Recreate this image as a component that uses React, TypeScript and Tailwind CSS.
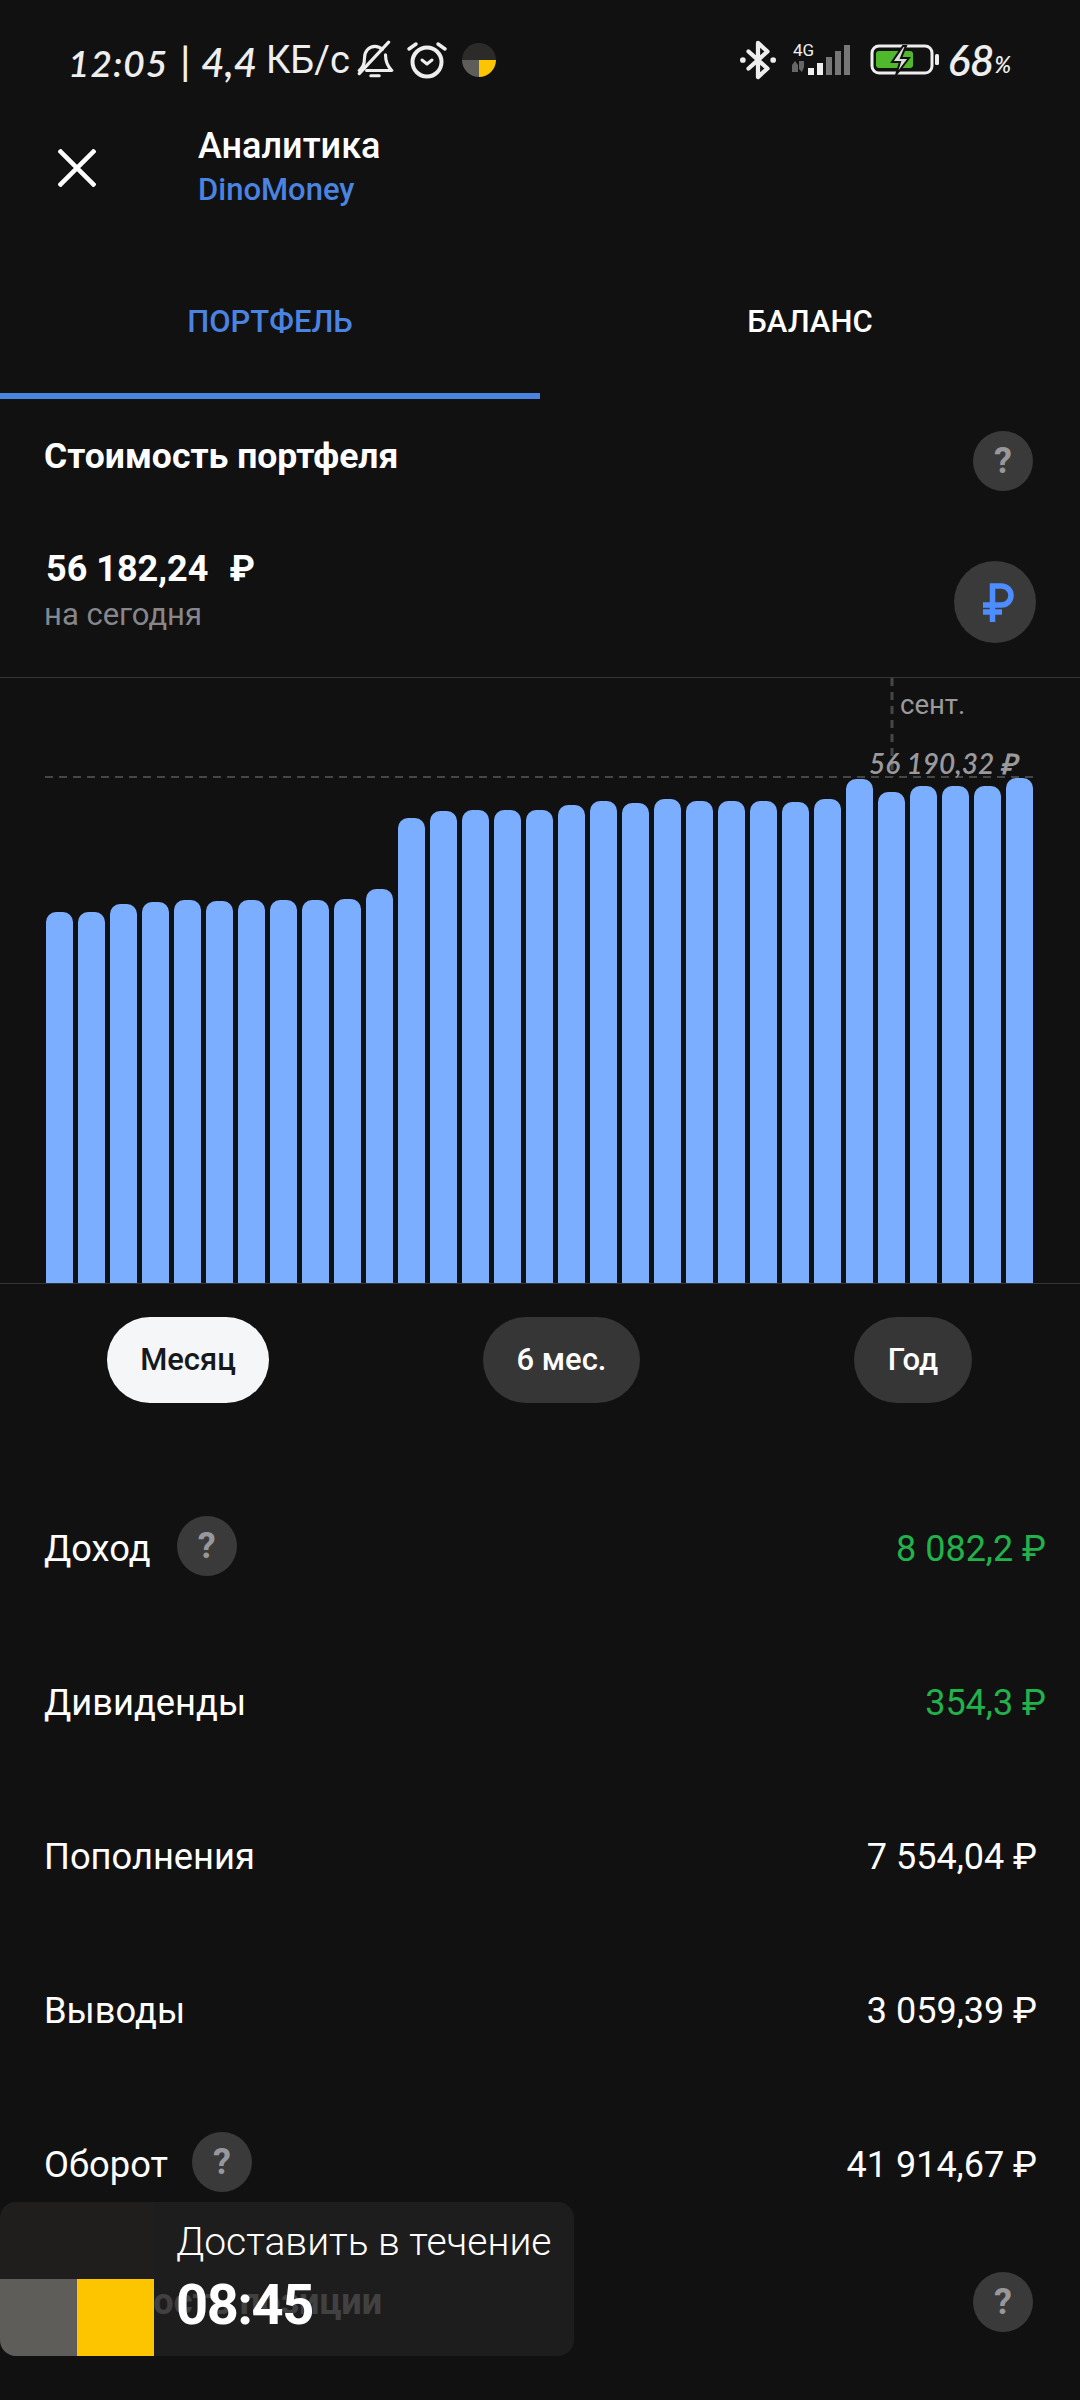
import React from "react";

const bars = [912, 912, 904, 902, 900, 901, 900, 900, 900, 899, 889, 818, 811, 810, 810, 810, 805, 801, 803, 799, 801, 801, 801, 802, 799, 779, 792, 786, 786, 786, 778];

const Help = ({ className = "" }: { className?: string }) => (
  <div className={`flex h-[60px] w-[60px] shrink-0 items-center justify-center rounded-full bg-[#3a3a3a] text-[36px] font-bold leading-none text-[#98989c] ${className}`}>?</div>
);

const Row = ({ label, value, helpGap, green }: { label: string; value: string; helpGap?: string; green?: boolean }) => (
  <div className={`flex h-[154px] items-center justify-between pl-[44px] ${green ? "pr-[34px]" : "pr-[43px]"}`}>
    <div className="flex items-center">
      <span className="pt-[5px] text-[36.300px] leading-[44px] text-white">{label}</span>
      {helpGap && <Help className={helpGap} />}
    </div>
    <span className={`pt-[5px] text-[36px] leading-[44px] ${green ? "text-[#22b24c]" : "text-white"}`}>{value}</span>
  </div>
);

const Ruble = () => (
  <svg className="ml-[7px]" width="31" height="39" viewBox="0 0 31 39" fill="none" stroke="#4d8dff" strokeWidth="5.500">
    <path d="M9.500 39V3h9a9.500 9.500 0 0 1 0 19H0M0 29h19" />
  </svg>
);

export default function App() {
  return (
    <div className="relative h-[2400px] w-[1080px] overflow-hidden bg-[#111111] font-['Roboto',sans-serif] text-white">
      {/* status bar */}
      <div className="flex h-[120px] items-center justify-between pl-[68px] pr-[69px] text-[#eeeeee]">
        <div className="flex items-center">
          <span className="pt-[4px] font-['Lato',sans-serif] text-[37px] font-semibold italic leading-none tracking-[1px]">12:05</span>
          <span className="ml-[12px] font-['Lato',sans-serif] text-[38px] font-semibold italic leading-none">|</span>
          <span className="ml-[11px] pt-[4px] font-['Lato',sans-serif] text-[40px] font-semibold italic leading-none">4,4</span>
          <span className="ml-[9px] text-[38px] leading-none">КБ/с</span>
          <svg className="ml-[6px]" width="38" height="42" viewBox="0 0 36 40" fill="none" stroke="#eeeeee" strokeWidth="3" strokeLinecap="round" strokeLinejoin="round">
            <path d="M3 30c3-3 5-5 5-12 0-6 4-11 10-11 3 0 5 1 7 3M28 15c0 7 2 11 6 15H10M14 35h8M31 3 3 33" />
          </svg>
          <svg className="ml-[12px]" width="42" height="42" viewBox="0 0 42 42" fill="none" stroke="#eeeeee" strokeLinecap="round" strokeLinejoin="round">
            <circle cx="21" cy="23" r="14.500" strokeWidth="4" />
            <path d="M16 21l5 4 5-4" strokeWidth="3" />
            <path d="M3 10l7-5M39 10l-7-5" strokeWidth="3.500" />
          </svg>
          <svg className="ml-[14px]" width="34" height="34" viewBox="0 0 34 34">
            <path d="M0 17a17 17 0 0 1 34 0z" fill="#2d2b29" />
            <path d="M0 17h17v17a17 17 0 0 1-17-17z" fill="#5e5d5a" />
            <path d="M17 17h17a17 17 0 0 1-17 17z" fill="#fdc500" />
          </svg>
        </div>
        <div className="flex items-center">
          <svg width="36" height="40" viewBox="0 0 38 40" fill="none">
            <path d="M9 11l20 18-10 9V2l10 9L9 29" stroke="#eeeeee" strokeWidth="4.500" strokeLinejoin="round" strokeLinecap="round" />
            <circle cx="3" cy="20" r="3" fill="#eeeeee" />
            <circle cx="35" cy="20" r="3" fill="#eeeeee" />
          </svg>
          <svg className="ml-[14px]" width="66" height="40" viewBox="0 -3 66 40">
            <text x="3" y="13" fontSize="17" fill="#eeeeee" fontFamily="Roboto">4G</text>
            <path d="M2 22l3-4 3 4v7H2zM9 18h5v6l-2 5-3-3z" fill="#666666" />
            <path d="M18 25h6v7h-6zM27 20h6v12h-6z" fill="#eeeeee" />
            <path d="M36 14h6v18h-6zM45 8h6v24h-6zM54 2h6v30h-6z" fill="#777777" />
          </svg>
          <svg className="ml-[14px]" width="70" height="32" viewBox="0 0 70 32" fill="none">
            <rect x="2" y="2" width="60" height="27" rx="7" stroke="#eeeeee" strokeWidth="3" />
            <rect x="6" y="7" width="37" height="17" rx="3" fill="#4fb82b" />
            <rect x="65" y="10" width="4" height="11" rx="1.500" fill="#eeeeee" />
            <path d="M33 2 22 18h8l-4 13 13-17h-8l5-12z" fill="#dddddd" stroke="#111111" strokeWidth="2" />
          </svg>
          <span className="ml-[8px] font-['Lato',sans-serif] text-[42px] font-semibold italic leading-none">68</span>
          <span className="pt-[10px] font-['Lato',sans-serif] text-[22px] font-semibold italic leading-none">%</span>
        </div>
      </div>

      {/* header */}
      <div className="flex h-[96px] items-center pl-[58px]">
        <svg width="38" height="38" viewBox="0 0 38 38" stroke="#ffffff" strokeWidth="4.500">
          <path d="M1 1l36 36M37 1 1 37" />
        </svg>
        <div className="ml-[102px]">
          <div className="text-[36px] font-medium leading-[44px]">Аналитика</div>
          <div className="text-[31px] font-medium leading-[44px] text-[#4a83e0]">DinoMoney</div>
        </div>
      </div>

      {/* tabs */}
      <div className="flex h-[183px]">
        <div className="flex-1 border-b-[6px] border-[#4a83e0] pt-[86px] text-center text-[31px] font-medium leading-[40px] text-[#4a83e0]">ПОРТФЕЛЬ</div>
        <div className="flex-1 pt-[86px] text-center text-[31px] font-medium leading-[40px] text-white">БАЛАНС</div>
      </div>

      {/* portfolio */}
      <div className="mt-[32px] flex h-[60px] items-center justify-between pl-[44px] pr-[47px]">
        <span className="pb-[10px] text-[35.500px] font-bold leading-[40px]">Стоимость портфеля</span>
        <Help />
      </div>
      <div className="flex h-[187px] items-start justify-between border-b border-[#343434] pl-[46px] pr-[44px]">
        <div className="pt-[56px]">
          <div className="flex text-[36px] font-bold leading-[44px]">
            <span>56 182,24</span>
            <span className="ml-[21px]">₽</span>
          </div>
          <div className="-ml-[2px] mt-[4px] text-[31px] leading-[40px] text-[#85878c]">на сегодня</div>
        </div>
        <div className="mt-[70px] flex h-[82px] w-[82px] items-center justify-center rounded-full bg-[#3a3a3a]">
          <Ruble />
        </div>
      </div>

      {/* chart */}
      <div className="relative flex h-[606px] items-end gap-[5px] border-b border-[#343434] pl-[46px]">
        {bars.map((top, i) => (
          <div key={i} className="w-[27px] rounded-t-[10px] bg-[#7baeff]" style={{ height: 1283 - top }} />
        ))}
        <svg className="absolute left-0 top-0" width="1080" height="125" fill="none" stroke="#464646" strokeWidth="2" strokeDasharray="8 6">
          <path d="M45 99H1036" />
          <path d="M892 0V99" strokeWidth="3" />
        </svg>
        <span className="absolute left-[900px] top-[8px] text-[27.500px] leading-[38px] text-[#9a9a9c]">сент.</span>
        <span className="absolute left-[869px] top-[66px] whitespace-nowrap font-['Lato',sans-serif] text-[28px] font-semibold italic leading-[38px] text-[#9a9a9c]">56 190,32 ₽</span>
      </div>

      {/* periods */}
      <div className="flex justify-between pl-[107px] pr-[108px] pt-[33px]">
        <div className="flex h-[86px] w-[162px] items-center justify-center rounded-full bg-[#f5f6f8] text-[31px] font-medium text-[#17181a]">Месяц</div>
        <div className="flex h-[86px] w-[157px] items-center justify-center rounded-full bg-[#363636] text-[31px] font-medium">6 мес.</div>
        <div className="flex h-[86px] w-[118px] items-center justify-center rounded-full bg-[#363636] text-[31px] font-medium">Год</div>
      </div>

      {/* rows */}
      <div className="mt-[66px]">
        <Row label="Доход" value="8 082,2 ₽" helpGap="ml-[26px]" green />
        <Row label="Дивиденды" value="354,3 ₽" green />
        <Row label="Пополнения" value="7 554,04 ₽" />
        <Row label="Выводы" value="3 059,39 ₽" />
        <Row label="Оборот" value="41 914,67 ₽" helpGap="ml-[24px]" />
      </div>
      <div className="mt-[33px] flex h-[60px] items-center justify-between pl-[44px] pr-[47px]">
        <span className="text-[36px] font-bold leading-[40px]">Стоимость позиции</span>
        <Help />
      </div>

      {/* delivery banner */}
      <div className="absolute left-0 top-[2202px] flex h-[154px] w-[574px] overflow-hidden rounded-[16px] bg-[#212020]/85">
        <div className="flex w-[154px] shrink-0 flex-col justify-end bg-[#1f1e1d]">
          <div className="flex h-[77px]">
            <div className="w-[77px] bg-[#5e5d5a]" />
            <div className="w-[77px] bg-[#fdc500]" />
          </div>
        </div>
        <div className="pl-[22px] pt-[14px]">
          <div className="whitespace-nowrap text-[39px] font-light leading-[52px]">Доставить в течение</div>
          <div className="mt-[5px] text-[56px] font-bold leading-[64px] tracking-[-1.500px]">08:45</div>
        </div>
      </div>
    </div>
  );
}
